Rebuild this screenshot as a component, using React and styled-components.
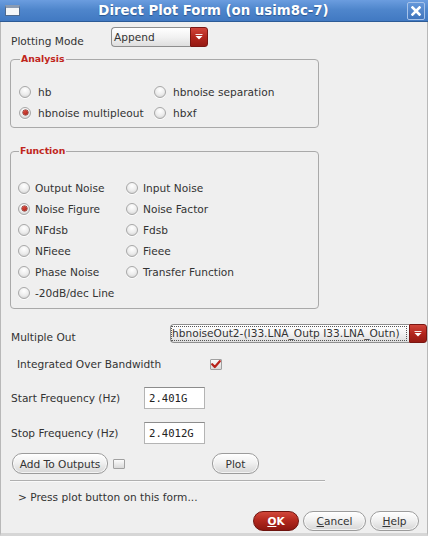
import React from 'react';
import styled, { createGlobalStyle, css } from 'styled-components';

const Global = createGlobalStyle`
  html, body { margin: 0; padding: 0; background: #efefef; }
  body {
    width: 428px; height: 536px; overflow: hidden;
    font-family: "DejaVu Sans", Verdana, sans-serif;
    font-size: 10.6px; color: #333;
  }
`;

const Window = styled.div`
  width: 428px; height: 536px; box-sizing: border-box;
  display: flex; flex-direction: column;
  background: #efefef;
`;

const TitleBar = styled.div`
  height: 22px; box-sizing: border-box; flex: none;
  display: flex; align-items: center; padding: 0 3px 0 5px;
  background: linear-gradient(#6b9ddf, #4f86cc 45%, #4179c2);
  border-bottom: 1px solid #2d5b96;
`;

const WinIcon = styled.div`
  width: 15px; height: 11px; box-sizing: border-box;
  background: #f4f6f8; border: 1px solid #4f6a8e; border-top: 3px solid #8a9bb3;
`;

const Title = styled.div`
  flex: 1; text-align: center; color: #fff;
  font-weight: bold; font-size: 13.3px;
  text-shadow: 0 1px 1px #2b568f;
`;

const CloseBtn = styled.div`
  width: 18px; height: 18px; box-sizing: border-box;
  border: 1px solid #a7c3ea; border-radius: 2px;
  background: linear-gradient(#6597d9, #3f74bc);
  display: flex; align-items: center; justify-content: center;
`;

const Body = styled.div`
  flex: 1; display: flex; flex-direction: column;
  padding: 0 0 0 9px;
  border-left: 1px solid #b8b8b8; border-right: 1px solid #b8b8b8; border-bottom: 3px solid #d6d6d6;
`;

const ModeRow = styled.div`
  display: flex; align-items: flex-start; margin-top: 5px; height: 20px;
`;

const Label = styled.div`
  width: ${p => p.$w}px; flex: none; line-height: 13px;
  padding-left: ${p => p.$pl || 1}px; box-sizing: border-box;
  margin-top: ${p => p.$mt || 0}px;
  white-space: nowrap;
`;

const Combo = styled.div`
  display: flex; height: ${p => p.$h}px; width: ${p => p.$w}px; box-sizing: border-box;
`;

const ComboField = styled.div`
  flex: 1; display: flex; align-items: center; box-sizing: border-box;
  border: 1px solid #8e8e8e; border-right: none;
  border-radius: 4px 0 0 4px;
  background: linear-gradient(#ffffff, #f2f2f2 50%, #dedede);
  padding-left: ${p => p.$pl}px; overflow: hidden; white-space: nowrap;
`;

const FocusText = styled.span`
  outline: 1px dotted #555; outline-offset: 0px; padding: 0 6px 0 0; line-height: 13px;
  margin-left: -1px;
`;

const ComboArrow = styled.div`
  width: 18px; flex: none; box-sizing: border-box;
  border: 1px solid #7a1612; border-radius: 0 3px 3px 0;
  background: linear-gradient(#d0453a, #b3261d 50%, #961a13);
  display: flex; align-items: center; justify-content: center;
`;

const Group = styled.fieldset`
  margin: ${p => p.$mt}px 0 0 0; width: 309px; box-sizing: border-box;
  border: 1px solid #a9a9a9; border-radius: 4px;
  padding: ${p => p.$pt}px 0 ${p => p.$pb}px ${p => p.$pl}px;
  min-width: 0;
`;

const Legend = styled.legend`
  font-weight: bold; font-size: 9.3px; color: #c0261c; line-height: 12px;
  padding: 0 1px; margin-left: 1px;
`;

const RadioGrid = styled.div`
  display: grid; grid-template-columns: ${p => p.$cols};
  grid-auto-rows: 21px;
`;

const RadioItem = styled.label`
  display: flex; align-items: center; gap: ${p => p.$gap}px; white-space: nowrap;
`;

const Radio = styled.span`
  width: 12px; height: 12px; border-radius: 50%; box-sizing: border-box; flex: none;
  border: 1px solid #a8a8a8;
  background: radial-gradient(circle at 50% 30%, #ffffff, #ececec 55%, #c9c9c9);
  box-shadow: 0 1px 0 rgba(255,255,255,.8);
  position: relative;
  ${p => p.$on && css`
    &::after {
      content: ''; position: absolute; left: 2.5px; top: 2.5px;
      width: 5px; height: 5px; border-radius: 50%;
      background: radial-gradient(circle at 40% 35%, #d8463a, #9b1c14);
      box-shadow: 0 0 0 0.5px #6b130d;
    }
  `}
`;

const FieldRow = styled.div`
  display: flex; align-items: ${p => p.$align || 'center'};
  margin-top: ${p => p.$mt}px;
`;

const Check = styled.span`
  width: 12px; height: ${p => p.$h || 11}px; box-sizing: border-box; flex: none;
  border: 1px solid #a0a0a0; border-radius: 1px;
  background: linear-gradient(#fbfbfb, #d9d9d9);
  display: flex; align-items: center; justify-content: center;
  margin-left: ${p => p.$ml || 0}px;
`;

const Input = styled.div`
  width: 61px; height: 22px; box-sizing: border-box;
  border: 1px solid #b4b4b4; border-top-color: #8c8c8c;
  background: #fff; display: flex; align-items: center; padding-left: 4px;
  font-family: "DejaVu Sans Mono", monospace; font-size: 10.6px; color: #222;
`;

const Pill = styled.button`
  height: ${p => p.$h || 21}px; width: ${p => p.$w}px; box-sizing: border-box;
  margin: 0; margin-left: ${p => p.$ml || 0}px; padding: 0;
  border: 1px solid #9c9c9c; border-radius: 10px;
  background: linear-gradient(#ffffff, #f1f1f1 45%, #d6d6d6);
  box-shadow: inset 0 0 0 1px rgba(255,255,255,.7);
  font-family: "DejaVu Sans", Verdana, sans-serif; font-size: 10.6px; color: #333;
  display: flex; align-items: center; justify-content: center;
  ${p => p.$primary && css`
    border-color: #6e130e;
    background: linear-gradient(#d2473b, #b4281e 45%, #8c1610);
    box-shadow: none; color: #fff; font-weight: bold;
  `}
`;

const ButtonRow = styled.div`
  display: flex; align-items: center; margin-top: 9px; padding-left: 2px;
`;

const Separator = styled.div`
  width: 315px; height: 0; border-top: 1px solid #b0b0b0; border-bottom: 1px solid #fafafa;
  margin-top: 6px;
`;

const Status = styled.div`
  margin-top: 9px; padding-left: 8px; line-height: 13px;
`;

const Footer = styled.div`
  display: flex; justify-content: flex-end; gap: 4px;
  margin-top: 7px; padding-right: 8px;
`;

const U = styled.span` text-decoration: underline; `;

const ArrowIcon = () => (
  <svg width="8" height="6" viewBox="0 0 8 6">
    <rect x="0.5" y="0" width="7" height="1" fill="#fff" opacity="0.9" />
    <path d="M0.5 2 L7.5 2 L4 5.5 Z" fill="#fff" />
  </svg>
);

const CheckMark = () => (
  <svg width="10" height="9" viewBox="0 0 10 9">
    <path d="M1.2 4.2 L3.8 7 L8.8 1.2" fill="none" stroke="#b8221a" strokeWidth="2.2" strokeLinecap="round" strokeLinejoin="round" />
  </svg>
);

const XIcon = () => (
  <svg width="10" height="10" viewBox="0 0 10 10">
    <path d="M1.5 1.5 L8.5 8.5 M8.5 1.5 L1.5 8.5" stroke="#fff" strokeWidth="2.6" strokeLinecap="square" />
  </svg>
);

const analysis = [
  ['hb', false], ['hbnoise separation', false],
  ['hbnoise multipleout', true], ['hbxf', false],
];

const functions = [
  ['Output Noise', false], ['Input Noise', false],
  ['Noise Figure', true], ['Noise Factor', false],
  ['NFdsb', false], ['Fdsb', false],
  ['NFieee', false], ['Fieee', false],
  ['Phase Noise', false], ['Transfer Function', false],
  ['-20dB/dec Line', false],
];

export default function App() {
  return (
    <Window>
      <Global />
      <TitleBar>
        <WinIcon />
        <Title>Direct Plot Form (on usim8c-7)</Title>
        <CloseBtn><XIcon /></CloseBtn>
      </TitleBar>
      <Body>
        <ModeRow>
          <Label $w={101} $mt={8}>Plotting Mode</Label>
          <Combo $w={97} $h={20}>
            <ComboField $pl={2}>Append</ComboField>
            <ComboArrow><ArrowIcon /></ComboArrow>
          </Combo>
        </ModeRow>

        <Group $mt={6} $pt={16} $pb={4} $pl={8}>
          <Legend>Analysis</Legend>
          <RadioGrid $cols="135px auto">
            {analysis.map(([t, on]) => (
              <RadioItem key={t} $gap={7}><Radio $on={on} />{t}</RadioItem>
            ))}
          </RadioGrid>
        </Group>

        <Group $mt={17} $pt={20} $pb={5} $pl={7}>
          <Legend>Function</Legend>
          <RadioGrid $cols="108px auto">
            {functions.map(([t, on]) => (
              <RadioItem key={t} $gap={5}><Radio $on={on} />{t}</RadioItem>
            ))}
          </RadioGrid>
        </Group>

        <FieldRow $mt={15} $align="flex-start">
          <Label $w={160} $mt={7}>Multiple Out</Label>
          <Combo $w={257} $h={19}>
            <ComboField $pl={2}><FocusText>hbnoiseOut2-(I33.LNA_Outp I33.LNA_Outn)</FocusText></ComboField>
            <ComboArrow><ArrowIcon /></ComboArrow>
          </Combo>
        </FieldRow>

        <FieldRow $mt={14}>
          <Label $w={200} $pl={7}>Integrated Over Bandwidth</Label>
          <Check><CheckMark /></Check>
        </FieldRow>

        <FieldRow $mt={16}>
          <Label $w={134}>Start Frequency (Hz)</Label>
          <Input>2.401G</Input>
        </FieldRow>

        <FieldRow $mt={13}>
          <Label $w={134}>Stop Frequency (Hz)</Label>
          <Input>2.4012G</Input>
        </FieldRow>

        <ButtonRow>
          <Pill $w={96}>Add To Outputs</Pill>
          <Check $h={10} $ml={5} />
          <Pill $w={47} $ml={87}>Plot</Pill>
        </ButtonRow>

        <Separator />
        <Status>&gt; Press plot button on this form...</Status>

        <Footer>
          <Pill $w={46} $h={20} $primary><U>O</U>K</Pill>
          <Pill $w={63} $h={20}><U>C</U>ancel</Pill>
          <Pill $w={49} $h={20}><U>H</U>elp</Pill>
        </Footer>
      </Body>
    </Window>
  );
}
